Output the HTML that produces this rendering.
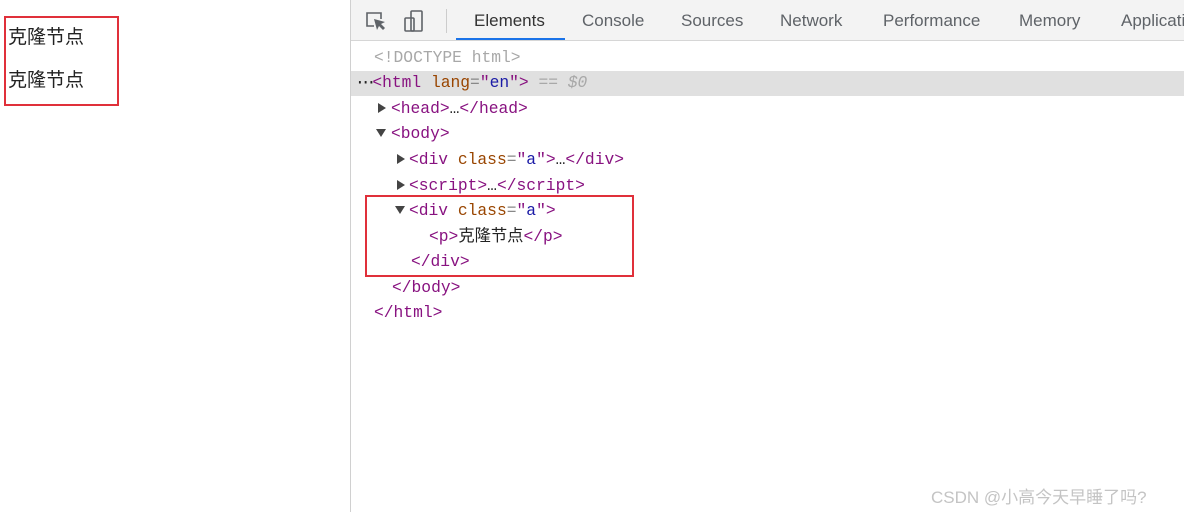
<!DOCTYPE html>
<html><head><meta charset="utf-8"><style>
body{margin:0;width:1184px;height:512px;background:#fff;position:relative;overflow:hidden;font-family:"Liberation Sans","Noto Sans CJK SC",sans-serif}
.a{position:absolute;white-space:nowrap}
.cn{font-size:19px;color:#222;left:8px}
.tab{position:absolute;top:11px;font-size:17px;color:#5f6368}
.m{position:absolute;font-family:"Liberation Mono","Noto Sans CJK SC",monospace;font-size:16.3px;white-space:nowrap;color:#881280;line-height:20px}
.g{color:#a8a8a8}.at{color:#994500}.v{color:#1a1aa6}.t{color:#222}.p{color:#888}
.r{position:absolute;width:0;height:0;border-top:5px solid transparent;border-bottom:5px solid transparent;border-left:8px solid #444}
.d{position:absolute;width:0;height:0;border-left:5px solid transparent;border-right:5px solid transparent;border-top:8px solid #444}
.e{letter-spacing:-4px}
</style></head><body>
<div class="a cn" style="top:22px">克隆节点</div>
<div class="a cn" style="top:65px">克隆节点</div>
<div class="a" style="left:4px;top:16px;width:111px;height:86px;border:2px solid #e0303a"></div>
<div class="a" style="left:350px;top:0;width:1px;height:512px;background:#d0d0d0"></div>
<div class="a" style="left:351px;top:0;width:833px;height:40px;background:#f3f3f3;border-bottom:1px solid #d6d6d6"></div>
<svg class="a" style="left:364px;top:10px" width="60" height="24" viewBox="0 0 60 24" fill="none" stroke="#5f6368" stroke-width="1.6">
<path d="M10 16H3V3h14v6"/><path d="M10 9l3 11 2-4 4 4 2-2-4-4 4-2z" fill="#5f6368" stroke="none"/>
<rect x="47" y="1" width="11" height="20" rx="1"/><rect x="41" y="8" width="9" height="13" rx="1"/></svg>
<div class="a" style="left:446px;top:9px;width:1px;height:24px;background:#ccc"></div>
<div class="tab" style="left:474px;color:#333">Elements</div>
<div class="a" style="left:456px;top:38px;width:109px;height:2px;background:#1a73e8"></div>
<div class="tab" style="left:582px">Console</div>
<div class="tab" style="left:681px">Sources</div>
<div class="tab" style="left:780px">Network</div>
<div class="tab" style="left:883px">Performance</div>
<div class="tab" style="left:1019px">Memory</div>
<div class="tab" style="left:1121px">Applicati</div>
<div class="a" style="left:351px;top:71px;width:833px;height:25px;background:#e0e0e0"></div>
<div class="m g" style="left:374px;top:48px">&lt;!DOCTYPE html&gt;</div>
<div class="m" style="left:355px;top:73px"><span class="t e">···</span>&lt;html <span class="at">lang</span><span class="p">=</span>"<span class="v">en</span>"&gt; <span class="g">== <i>$0</i></span></div>
<div class="r" style="left:378px;top:103px"></div>
<div class="m" style="left:391px;top:99px">&lt;head&gt;<span class="t">…</span>&lt;/head&gt;</div>
<div class="d" style="left:376px;top:129px"></div>
<div class="m" style="left:391px;top:124px">&lt;body&gt;</div>
<div class="r" style="left:397px;top:154px"></div>
<div class="m" style="left:409px;top:150px">&lt;div <span class="at">class</span><span class="p">=</span>"<span class="v">a</span>"&gt;<span class="t">…</span>&lt;/div&gt;</div>
<div class="r" style="left:397px;top:180px"></div>
<div class="m" style="left:409px;top:176px">&lt;script&gt;<span class="t">…</span>&lt;/script&gt;</div>
<div class="d" style="left:395px;top:206px"></div>
<div class="m" style="left:409px;top:201px">&lt;div <span class="at">class</span><span class="p">=</span>"<span class="v">a</span>"&gt;</div>
<div class="m" style="left:429px;top:227px">&lt;p&gt;<span class="t">克隆节点</span>&lt;/p&gt;</div>
<div class="m" style="left:411px;top:252px">&lt;/div&gt;</div>
<div class="m" style="left:392px;top:278px">&lt;/body&gt;</div>
<div class="m" style="left:374px;top:303px">&lt;/html&gt;</div>
<div class="a" style="left:365px;top:195px;width:265px;height:78px;border:2px solid #e0303a"></div>
<div class="a" style="left:931px;top:483px;font-size:17px;color:#c4c4c4">CSDN @小高今天早睡了吗?</div>
</body></html>
